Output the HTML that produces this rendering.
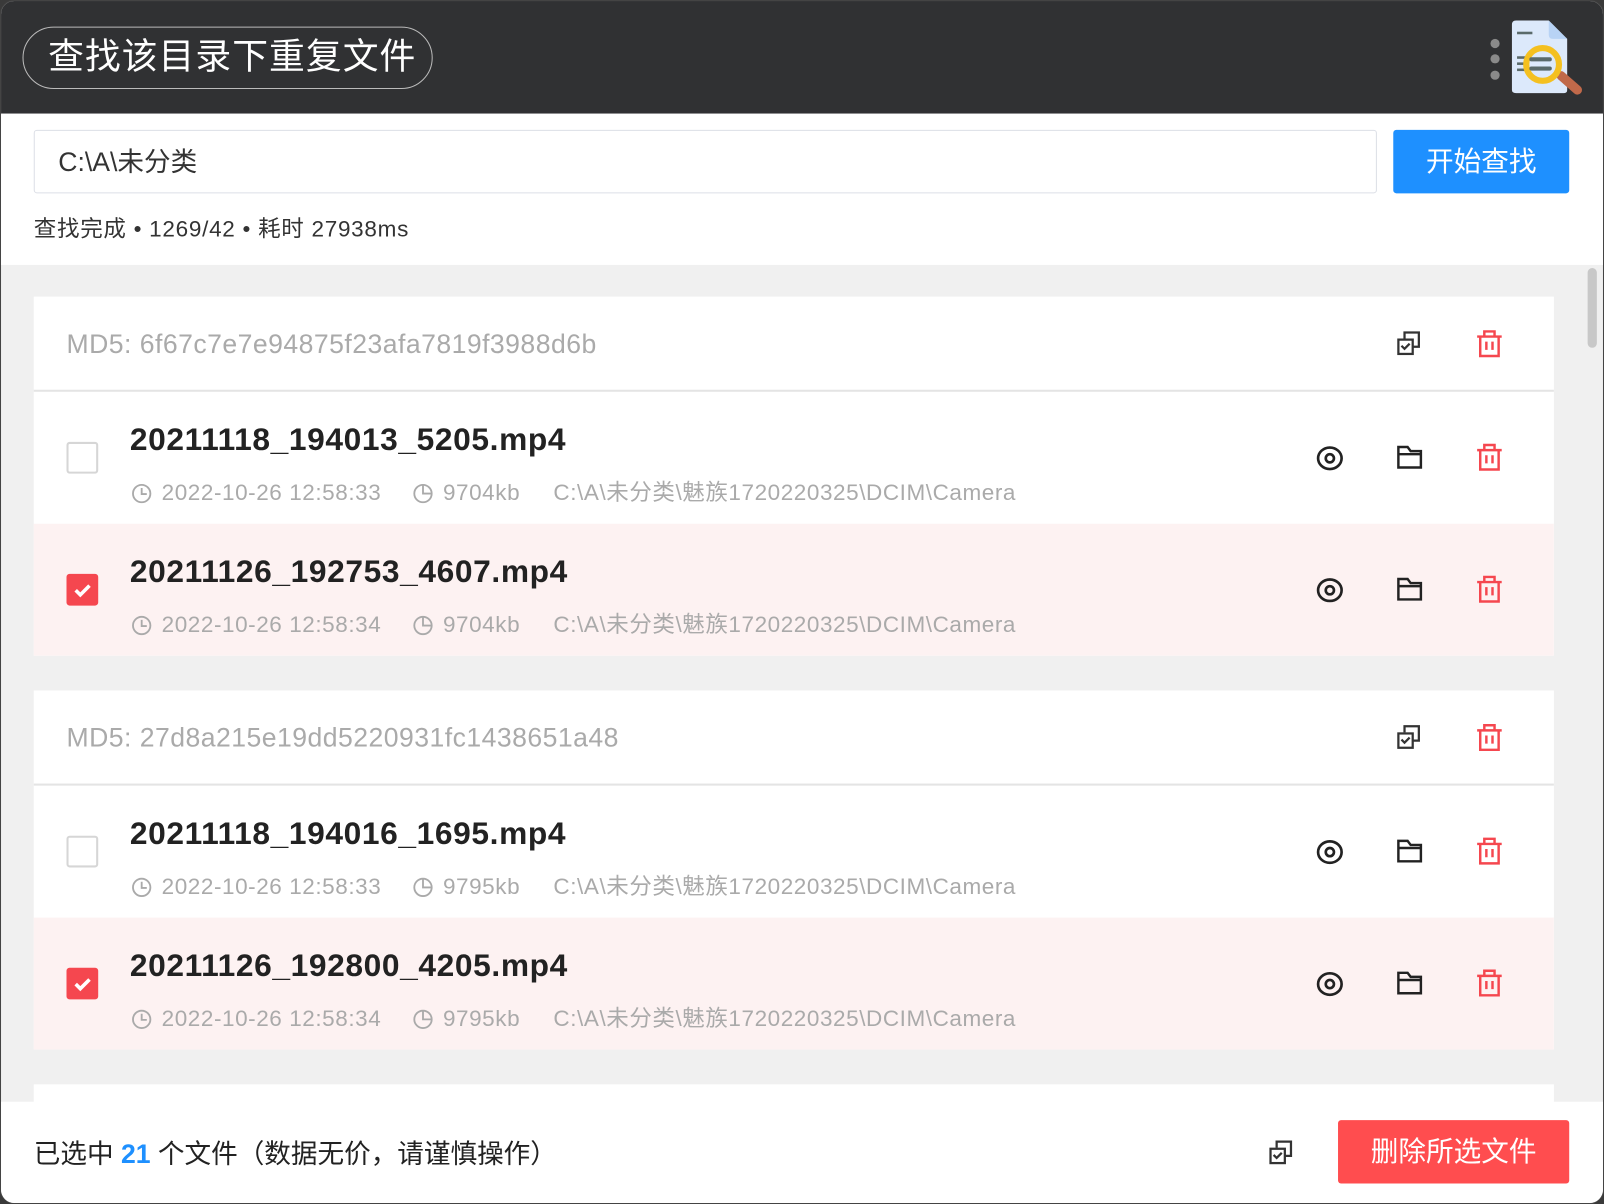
<!DOCTYPE html>
<html><head><meta charset="utf-8">
<style>
*{margin:0;padding:0;box-sizing:border-box}
html,body{width:1604px;height:1204px;overflow:hidden;background:#3a3a3a}
#root{position:absolute;left:0;top:0;width:1568px;height:1177px;transform:scale(1.02296,1.02294);transform-origin:0 0;font-family:"Liberation Sans","Noto Sans CJK SC",sans-serif;background:#f0f0f0;border-radius:14px;overflow:hidden;border:1px solid #444}
.abs{position:absolute}
#hdr{left:0;top:0;width:1568px;height:111px;background:#303133}
#pill{left:21px;top:25px;width:401px;height:61px;border:1.5px solid #bbb;border-radius:31px;color:#fff;font-size:35px;line-height:58px;padding-left:24px;letter-spacing:1px}
.dot{width:9px;height:9px;border-radius:50%;background:#8a8a8a;left:1456px}
#top{left:0;top:110px;width:1568px;height:148px;background:#fff}
#inp{left:32px;top:126px;width:1313px;height:62px;border:1.5px solid #dcdfe6;border-radius:3px;font-size:26px;line-height:60px;padding-left:23px;color:#333}
#btn{left:1361px;top:126px;width:172px;height:62px;background:#1e90ff;border-radius:3px;color:#fff;font-size:27px;line-height:62px;text-align:center}
#stat{left:32px;top:207px;font-size:22px;color:#333;line-height:32px;letter-spacing:0.7px}
.card{left:32px;width:1486px;background:#fff}
.mh{height:93px;border-bottom:2px solid #e4e4e4;font-size:26px;color:#aaa;line-height:93px;padding-left:32px;position:relative;letter-spacing:0.45px}
.row{height:129px;position:relative}
.row.sel{background:#fdf2f2}
.cb{position:absolute;left:32px;top:49px;width:31px;height:31px;border:2px solid #d6d6d6;border-radius:3px;background:#fff}
.cb.on{background:#f5474f;border-color:#f5474f}
.fn{position:absolute;left:94px;top:27px;font-size:31px;font-weight:bold;color:#222;line-height:40px;letter-spacing:0.6px}
.meta{position:absolute;top:84px;font-size:22px;color:#aaa;line-height:30px;white-space:nowrap;letter-spacing:0.55px}
.ic{position:absolute}
.mi{position:absolute;top:89px}
#foot{left:0;top:1076px;width:1568px;height:101px;background:#fff}
#ft{left:32px;top:1107px;font-size:26px;color:#222;line-height:40px}
#del{left:1307px;top:1094px;width:226px;height:62px;background:#ff4d4f;border-radius:3px;color:#fff;font-size:27px;line-height:62px;text-align:center}
#sb{left:1551px;top:261px;width:9px;height:78px;background:#c8c8c8;border-radius:5px}
</style></head><body>
<div id="root">
<div class="abs" id="hdr"></div>
<div class="abs" id="pill">查找该目录下重复文件</div>
<div class="abs dot" style="top:37px"></div>
<div class="abs dot" style="top:52px"></div>
<div class="abs dot" style="top:68px"></div>
<svg class="abs" style="left:1473px;top:17px" width="76" height="78" viewBox="0 0 76 78">
<path d="M4 6 Q4 2 8 2 L40 2 L58 20 L58 70 Q58 73 55 73 L8 73 Q4 73 4 70Z" fill="#dce9fb"/>
<path d="M40 2 L58 20 L44 20 Q40 20 40 16Z" fill="#b8d3f5"/>
<rect x="9" y="13" width="15" height="2.5" fill="#5a6a6a"/>
<rect x="9" y="37" width="10" height="2.5" fill="#5a6a6a"/><rect x="9" y="43" width="10" height="2.5" fill="#5a6a6a"/><rect x="9" y="49" width="10" height="2.5" fill="#5a6a6a"/>
<path d="M52 56 L68 70" stroke="#c0694a" stroke-width="9" stroke-linecap="round"/>
<circle cx="34" cy="45" r="16" fill="#dce9fb" stroke="#f4c020" stroke-width="6"/>
<rect x="21" y="38" width="22" height="4" rx="2" fill="#5a6a6a"/><rect x="21" y="47" width="22" height="4" rx="2" fill="#5a6a6a"/>
</svg>
<div class="abs" id="top"></div>
<div class="abs" id="inp">C:\A\未分类</div>
<div class="abs" id="btn">开始查找</div>
<div class="abs" id="stat">查找完成 • 1269/42 • 耗时 27938ms</div>
<div class="abs" id="sb"></div>

<!-- card 1 -->
<div class="abs card" style="top:289px">
 <div class="mh">MD5: 6f67c7e7e94875f23afa7819f3988d6b
  <svg class="ic" style="left:1332px;top:33px" width="26" height="26" viewBox="0 0 26 26" fill="none" stroke="#333" stroke-width="2.2"><path d="M8 8V2h14v14h-6"/><rect x="2" y="9" width="14" height="14"/><path d="M5 15l3 3 5-5"/></svg>
  <svg class="ic" style="left:1410px;top:32px" width="26" height="28" viewBox="0 0 26 28" fill="none" stroke="#f5474f" stroke-width="2.4"><path d="M1 7h24M8 7V2h10v5M4 7v19h18V7M10 12v8M16 12v8"/></svg>
 </div>
 <div class="row">
  <div class="cb"></div><div class="fn">20211118_194013_5205.mp4</div>
  <svg class="mi" style="left:95px" width="21" height="21" viewBox="0 0 21 21" fill="none" stroke="#aaa" stroke-width="1.8"><circle cx="10.5" cy="10.5" r="8.5"/><path d="M10.5 5v6h5"/></svg>
  <div class="meta" style="left:125px">2022-10-26 12:58:33</div>
  <svg class="mi" style="left:370px" width="21" height="21" viewBox="0 0 21 21" fill="none" stroke="#aaa" stroke-width="1.8"><circle cx="10.5" cy="10.5" r="8.5"/><path d="M10.5 2v8.5h8.5"/></svg>
  <div class="meta" style="left:400px">9704kb</div><div class="meta" style="left:508px">C:\A\未分类\魅族1720220325\DCIM\Camera</div>
  <svg class="ic" style="left:1253px;top:52px" width="28" height="26" viewBox="0 0 28 26" fill="none" stroke="#222" stroke-width="2.6"><ellipse cx="14" cy="13" rx="11.5" ry="10.5"/><circle cx="14" cy="13" r="4"/></svg>
  <svg class="ic" style="left:1332px;top:52px" width="26" height="24" viewBox="0 0 26 24" fill="none" stroke="#222" stroke-width="2.4"><path d="M2 2h9l3 4h10v16H2zM2 9h22"/></svg>
  <svg class="ic" style="left:1410px;top:50px" width="26" height="28" viewBox="0 0 26 28" fill="none" stroke="#f5474f" stroke-width="2.4"><path d="M1 7h24M8 7V2h10v5M4 7v19h18V7M10 12v8M16 12v8"/></svg>
 </div>
 <div class="row sel">
  <div class="cb on"><svg width="27" height="27" viewBox="0 0 27 27"><path d="M7 14l4.5 4.5 9-9" fill="none" stroke="#fff" stroke-width="3.5"/></svg></div><div class="fn">20211126_192753_4607.mp4</div>
  <svg class="mi" style="left:95px" width="21" height="21" viewBox="0 0 21 21" fill="none" stroke="#aaa" stroke-width="1.8"><circle cx="10.5" cy="10.5" r="8.5"/><path d="M10.5 5v6h5"/></svg>
  <div class="meta" style="left:125px">2022-10-26 12:58:34</div>
  <svg class="mi" style="left:370px" width="21" height="21" viewBox="0 0 21 21" fill="none" stroke="#aaa" stroke-width="1.8"><circle cx="10.5" cy="10.5" r="8.5"/><path d="M10.5 2v8.5h8.5"/></svg>
  <div class="meta" style="left:400px">9704kb</div><div class="meta" style="left:508px">C:\A\未分类\魅族1720220325\DCIM\Camera</div>
  <svg class="ic" style="left:1253px;top:52px" width="28" height="26" viewBox="0 0 28 26" fill="none" stroke="#222" stroke-width="2.6"><ellipse cx="14" cy="13" rx="11.5" ry="10.5"/><circle cx="14" cy="13" r="4"/></svg>
  <svg class="ic" style="left:1332px;top:52px" width="26" height="24" viewBox="0 0 26 24" fill="none" stroke="#222" stroke-width="2.4"><path d="M2 2h9l3 4h10v16H2zM2 9h22"/></svg>
  <svg class="ic" style="left:1410px;top:50px" width="26" height="28" viewBox="0 0 26 28" fill="none" stroke="#f5474f" stroke-width="2.4"><path d="M1 7h24M8 7V2h10v5M4 7v19h18V7M10 12v8M16 12v8"/></svg>
 </div>
</div>

<!-- card 2 -->
<div class="abs card" style="top:674px">
 <div class="mh">MD5: 27d8a215e19dd5220931fc1438651a48
  <svg class="ic" style="left:1332px;top:33px" width="26" height="26" viewBox="0 0 26 26" fill="none" stroke="#333" stroke-width="2.2"><path d="M8 8V2h14v14h-6"/><rect x="2" y="9" width="14" height="14"/><path d="M5 15l3 3 5-5"/></svg>
  <svg class="ic" style="left:1410px;top:32px" width="26" height="28" viewBox="0 0 26 28" fill="none" stroke="#f5474f" stroke-width="2.4"><path d="M1 7h24M8 7V2h10v5M4 7v19h18V7M10 12v8M16 12v8"/></svg>
 </div>
 <div class="row">
  <div class="cb"></div><div class="fn">20211118_194016_1695.mp4</div>
  <svg class="mi" style="left:95px" width="21" height="21" viewBox="0 0 21 21" fill="none" stroke="#aaa" stroke-width="1.8"><circle cx="10.5" cy="10.5" r="8.5"/><path d="M10.5 5v6h5"/></svg>
  <div class="meta" style="left:125px">2022-10-26 12:58:33</div>
  <svg class="mi" style="left:370px" width="21" height="21" viewBox="0 0 21 21" fill="none" stroke="#aaa" stroke-width="1.8"><circle cx="10.5" cy="10.5" r="8.5"/><path d="M10.5 2v8.5h8.5"/></svg>
  <div class="meta" style="left:400px">9795kb</div><div class="meta" style="left:508px">C:\A\未分类\魅族1720220325\DCIM\Camera</div>
  <svg class="ic" style="left:1253px;top:52px" width="28" height="26" viewBox="0 0 28 26" fill="none" stroke="#222" stroke-width="2.6"><ellipse cx="14" cy="13" rx="11.5" ry="10.5"/><circle cx="14" cy="13" r="4"/></svg>
  <svg class="ic" style="left:1332px;top:52px" width="26" height="24" viewBox="0 0 26 24" fill="none" stroke="#222" stroke-width="2.4"><path d="M2 2h9l3 4h10v16H2zM2 9h22"/></svg>
  <svg class="ic" style="left:1410px;top:50px" width="26" height="28" viewBox="0 0 26 28" fill="none" stroke="#f5474f" stroke-width="2.4"><path d="M1 7h24M8 7V2h10v5M4 7v19h18V7M10 12v8M16 12v8"/></svg>
 </div>
 <div class="row sel">
  <div class="cb on"><svg width="27" height="27" viewBox="0 0 27 27"><path d="M7 14l4.5 4.5 9-9" fill="none" stroke="#fff" stroke-width="3.5"/></svg></div><div class="fn">20211126_192800_4205.mp4</div>
  <svg class="mi" style="left:95px" width="21" height="21" viewBox="0 0 21 21" fill="none" stroke="#aaa" stroke-width="1.8"><circle cx="10.5" cy="10.5" r="8.5"/><path d="M10.5 5v6h5"/></svg>
  <div class="meta" style="left:125px">2022-10-26 12:58:34</div>
  <svg class="mi" style="left:370px" width="21" height="21" viewBox="0 0 21 21" fill="none" stroke="#aaa" stroke-width="1.8"><circle cx="10.5" cy="10.5" r="8.5"/><path d="M10.5 2v8.5h8.5"/></svg>
  <div class="meta" style="left:400px">9795kb</div><div class="meta" style="left:508px">C:\A\未分类\魅族1720220325\DCIM\Camera</div>
  <svg class="ic" style="left:1253px;top:52px" width="28" height="26" viewBox="0 0 28 26" fill="none" stroke="#222" stroke-width="2.6"><ellipse cx="14" cy="13" rx="11.5" ry="10.5"/><circle cx="14" cy="13" r="4"/></svg>
  <svg class="ic" style="left:1332px;top:52px" width="26" height="24" viewBox="0 0 26 24" fill="none" stroke="#222" stroke-width="2.4"><path d="M2 2h9l3 4h10v16H2zM2 9h22"/></svg>
  <svg class="ic" style="left:1410px;top:50px" width="26" height="28" viewBox="0 0 26 28" fill="none" stroke="#f5474f" stroke-width="2.4"><path d="M1 7h24M8 7V2h10v5M4 7v19h18V7M10 12v8M16 12v8"/></svg>
 </div>
</div>
<div class="abs card" style="top:1059px;height:40px"></div>

<div class="abs" id="foot"></div>
<div class="abs" id="ft">已选中 <b style="color:#1e90ff">21</b> 个文件（数据无价，请谨慎操作）</div>
<svg class="abs" style="left:1239px;top:1113px" width="26" height="26" viewBox="0 0 26 26" fill="none" stroke="#333" stroke-width="2.2"><path d="M8 8V2h14v14h-6"/><rect x="2" y="9" width="14" height="14"/><path d="M5 15l3 3 5-5"/></svg>
<div class="abs" id="del">删除所选文件</div>
</div>
</body></html>
